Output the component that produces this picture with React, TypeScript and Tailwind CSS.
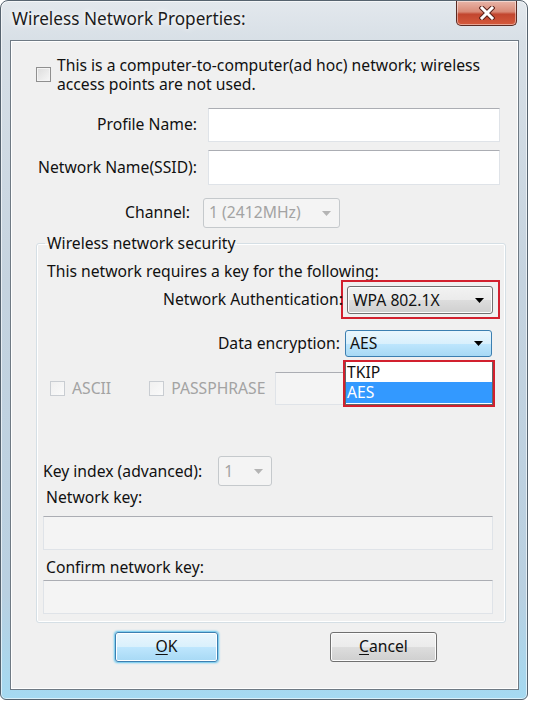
import type { ReactNode } from 'react'

/** Vista-style check box (unchecked). */
function CheckBox({ disabled }: { disabled?: boolean }) {
  return (
    <span
      className={
        disabled
          ? 'block size-[15px] shrink-0 border border-[#c9cdd2] bg-[linear-gradient(135deg,#f0f0f0,#fafafa)]'
          : 'block size-[15px] shrink-0 border border-[#8f8f8f] bg-[linear-gradient(135deg,#dcdcdc,#f7f7f7)] shadow-[inset_0_0_0_1px_#f4f4f4]'
      }
    />
  )
}

function TextBox({ className = '', disabled }: { className?: string; disabled?: boolean }) {
  return (
    <div
      className={`${className} border border-[#dfe3e8] border-t-[#abadb3] ${
        disabled ? 'bg-[#f4f4f4]' : 'bg-white'
      }`}
    />
  )
}

function Arrow({ color = '#000' }: { color?: string }) {
  return (
    <svg width="9" height="5" viewBox="0 0 9 5" className="shrink-0">
      <path d="M0 0h9L4.5 5z" fill={color} />
    </svg>
  )
}

function DisabledCombo({ value, className = '' }: { value: string; className?: string }) {
  return (
    <div
      className={`${className} flex items-center justify-between rounded-[3px] border border-[#c5c9cc] bg-[#f4f4f4] pl-[5px] pr-[8px] text-[#a3a3a3]`}
    >
      <span>{value}</span>
      <Arrow color="#b4b4b4" />
    </div>
  )
}

function RedMark({ className = '', children }: { className?: string; children: ReactNode }) {
  return <div className={`${className} border-2 border-[#d2202e]`}>{children}</div>
}

export default function App() {
  return (
    <div className="h-[711px] w-[538px] bg-white font-['Noto_Sans',sans-serif] text-[15.7px] leading-none text-[#111]">
      {/* window frame */}
      <div className="flex h-[700px] w-[528px] flex-col rounded-t-[8px] rounded-b-[6px] border border-[#56636f] bg-[linear-gradient(180deg,#e3e8ed_0%,#d7dfe6_6%,#c5d3df_40%,#b9d0e1_85%,#a4d9f1_100%)] shadow-[inset_0_0_0_1px_rgba(255,255,255,0.6)]">
        {/* title bar */}
        <div className="flex h-[39px] items-start justify-between">
          <div className="pl-[11px] pt-[9px] text-[17.2px] text-[#1b1b1b] [text-shadow:0_0_8px_#fff,0_0_4px_#fff]">
            Wireless Network Properties:
          </div>
          <div className="mr-[10px] flex h-[25px] w-[61px] items-center justify-center rounded-b-[5px] border border-t-0 border-[#5b2a22] bg-[linear-gradient(180deg,#e8b5a8_0%,#d98a77_45%,#c2462f_55%,#d55a3c_100%)] shadow-[inset_0_0_0_1px_rgba(255,255,255,0.45)]">
            <svg width="16" height="14" viewBox="0 0 16 14">
              <path
                d="M3 2l10 10M13 2L3 12"
                stroke="#5a2119"
                strokeWidth="5"
                strokeLinecap="square"
              />
              <path d="M3 2l10 10M13 2L3 12" stroke="#fff" strokeWidth="3" strokeLinecap="square" />
            </svg>
          </div>
        </div>

        {/* client area */}
        <div className="ml-[9px] flex h-[650px] w-[509px] flex-col border border-[#6f7a84] bg-[#f0f0f0] shadow-[inset_0_0_0_1px_#fff]">
          {/* ad hoc */}
          <div className="ml-[25px] mt-[15px] flex items-center gap-[6px]">
            <CheckBox />
            <p className="leading-[18.5px]">
              This is a computer-to-computer(ad hoc) network; wireless
              <br />
              access points are not used.
            </p>
          </div>

          <div className="mt-[15px] flex items-center">
            <span className="w-[186px] whitespace-nowrap text-right">Profile Name:</span>
            <TextBox className="ml-[11px] h-[34px] w-[292px]" />
          </div>
          <div className="mt-[8px] flex items-center">
            <span className="w-[186px] whitespace-nowrap text-right">Network Name(SSID):</span>
            <TextBox className="ml-[11px] h-[35px] w-[292px]" />
          </div>
          <div className="mt-[13px] flex items-center">
            <span className="w-[179px] whitespace-nowrap text-right">Channel:</span>
            <DisabledCombo value="1 (2412MHz)" className="ml-[13px] h-[30px] w-[137px]" />
          </div>

          {/* security group */}
          <fieldset className="ml-[25px] mt-[8px] w-[470px] rounded-[3px] border border-[#d5dfe5] pb-[8px] shadow-[inset_0_0_0_1px_#fff]">
            <legend className="ml-[8px] px-[2px]">Wireless network security</legend>
            <div className="ml-[10px] mt-[12px]">This network requires a key for the following:</div>

            <div className="mt-[1px] flex items-center">
              <span className="relative z-10 w-[306px] whitespace-nowrap text-right">
                Network Authentication:
              </span>
              <RedMark className="ml-[-2px] h-[39px] w-[159px] pl-[4px] pr-[5px] pt-[4px]">
                <div className="flex h-[28px] items-center justify-between rounded-[3px] border border-[#707070] bg-[linear-gradient(180deg,#f2f2f2_0%,#ebebeb_50%,#dddddd_51%,#cfcfcf_100%)] pl-[5px] pr-[8px] shadow-[inset_0_0_0_1px_#fcfcfc]">
                  <span>WPA 802.1X</span>
                  <Arrow />
                </div>
              </RedMark>
            </div>

            <div className="mt-[11px] flex items-center">
              <span className="w-[303px] whitespace-nowrap text-right">Data encryption:</span>
              <div className="relative ml-[5px]">
                <div className="flex h-[27px] w-[147px] items-center justify-between rounded-[3px] border border-[#3c7fb1] bg-[linear-gradient(180deg,#eaf6fd_0%,#d9f0fc_50%,#bee6fd_51%,#a7d9f5_100%)] pl-[4px] pr-[8px]">
                  <span>AES</span>
                  <Arrow />
                </div>
                {/* open drop-down list */}
                <RedMark className="absolute left-[-2px] top-[30px] z-20 h-[47px] w-[152px] bg-white">
                  <div className="h-full border border-t-0 border-[#646464]">
                    <div className="flex h-[20px] items-center pl-[1px]">TKIP</div>
                    <div className="flex h-[21px] items-center bg-[#3399ff] pl-[1px] text-white">AES</div>
                  </div>
                </RedMark>
              </div>
            </div>

            <div className="mt-[15px] flex items-center text-[#a3a3a3]">
              <span className="ml-[13px]">
                <CheckBox disabled />
              </span>
              <span className="ml-[7px]">ASCII</span>
              <span className="ml-[38px]">
                <CheckBox disabled />
              </span>
              <span className="ml-[7px]">PASSPHRASE</span>
              <TextBox disabled className="ml-[10px] h-[33px] w-[200px]" />
            </div>

            <div className="mt-[51px] flex items-center">
              <span className="ml-[6px] whitespace-nowrap">Key index (advanced):</span>
              <DisabledCombo value="1" className="ml-[16px] h-[30px] w-[54px]" />
            </div>
            <div className="ml-[9px] mt-[4px]">Network key:</div>
            <TextBox disabled className="ml-[6px] mt-[10px] h-[34px] w-[450px]" />
            <div className="ml-[9px] mt-[10px]">Confirm network key:</div>
            <TextBox disabled className="ml-[6px] mt-[4px] h-[34px] w-[450px]" />
          </fieldset>

          {/* buttons */}
          <div className="mt-[9px] flex">
            <button
              type="button"
              className="ml-[104px] h-[30px] w-[103px] rounded-[3px] border border-[#3c7fb1] bg-[linear-gradient(180deg,#eaf6fd_0%,#d9f0fc_50%,#bee6fd_51%,#a7d9f5_100%)] shadow-[0_0_2px_1px_#5fc4ee,inset_0_0_0_1px_#fff]"
            >
              <span className="underline underline-offset-2">O</span>K
            </button>
            <button
              type="button"
              className="ml-[112px] h-[30px] w-[107px] rounded-[3px] border border-[#707070] bg-[linear-gradient(180deg,#f2f2f2_0%,#ebebeb_50%,#dddddd_51%,#cfcfcf_100%)] shadow-[inset_0_0_0_1px_#fcfcfc]"
            >
              <span className="underline underline-offset-2">C</span>ancel
            </button>
          </div>
        </div>
      </div>
    </div>
  )
}
